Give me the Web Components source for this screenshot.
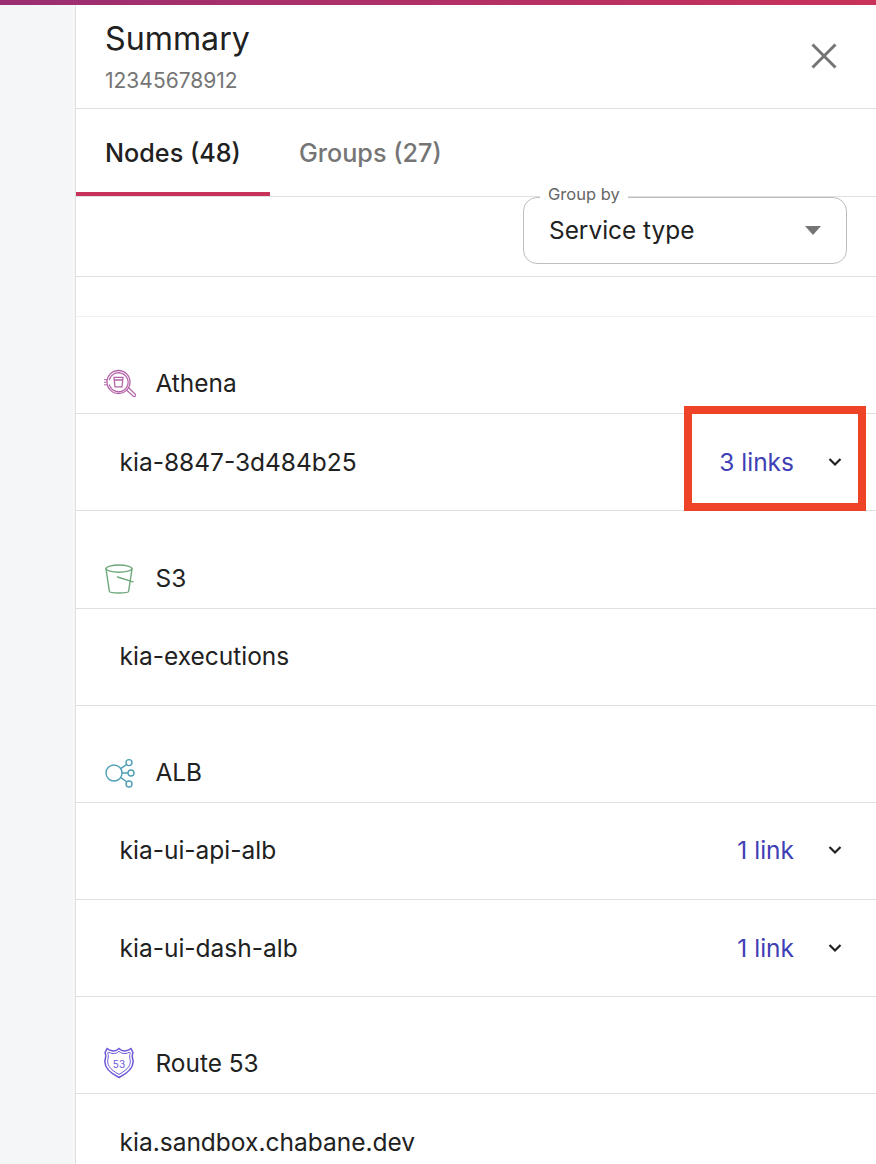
<!doctype html>
<html>
<head>
<meta charset="utf-8">
<title>Summary</title>
<style>
    html,body{margin:0;height:1164px;overflow:hidden;background:#fff}
    body{font-family:Inter,"Liberation Sans",sans-serif;color:#212121}
</style>
</head>
<body>
<summary-page>
    <panel-header slot="header" title="Summary" sub="12345678912"></panel-header>
    <tab-bar slot="tabs">
        <tab-item active>Nodes (48)</tab-item>
        <tab-item>Groups (27)</tab-item>
    </tab-bar>
    <group-select slot="filter" label="Group by" value="Service type"></group-select>

    <service-head icon="athena">Athena</service-head>
    <node-row links="3 links" marked>kia-8847-3d484b25</node-row>
    <service-head icon="s3">S3</service-head>
    <node-row>kia-executions</node-row>
    <service-head icon="alb">ALB</service-head>
    <node-row links="1 link">kia-ui-api-alb</node-row>
    <node-row links="1 link">kia-ui-dash-alb</node-row>
    <service-head icon="route53">Route 53</service-head>
    <node-row>kia.sandbox.chabane.dev</node-row>
</summary-page>

<script>
const ICONS = {
    athena: `<svg width="32" height="32" viewBox="0 0 32 32" fill="none" stroke="#b565a9" stroke-width="1.3" stroke-linecap="round">
        <circle cx="14.5" cy="15" r="11.5"/>
        <path d="M5.5 12.5a9.5 9.5 0 1 1 0 5.5" stroke-dasharray="3 .8"/>
        <path d="M23 23.5l6.2 5.6a1.4 1.4 0 0 0 2-2l-6-5.9"/>
        <path d="M0 12.6h3M0 15.2h2.4M0 17.8h3" stroke-width="1"/>
        <path d="M10 10.4h9l-1 9.4h-7zM10.6 13h7.8"/>
    </svg>`,
    s3: `<svg width="32" height="32" viewBox="0 0 32 32" fill="none" stroke="#6fa87b" stroke-width="1.4" stroke-linecap="round">
        <ellipse cx="15" cy="6.6" rx="13" ry="3.6"/>
        <path d="M2 7l3.4 22.4c.2 1 4.6 1.6 9.6 1.6s9.4-.6 9.6-1.6L28 7"/>
        <path d="M13.5 15l15.5 4.8"/>
    </svg>`,
    alb: `<svg width="32" height="32" viewBox="0 0 32 32" fill="none" stroke="#509fb6" stroke-width="1.4">
        <circle cx="10" cy="17" r="8"/>
        <circle cx="25" cy="6.6" r="3"/>
        <circle cx="27" cy="17" r="3"/>
        <circle cx="25" cy="28" r="3"/>
        <path d="M16.6 12.6l6-4M18 17h6M16.6 21.4l6 4.4"/>
    </svg>`,
    route53: `<svg width="32" height="32" viewBox="0 0 32 32" fill="none" stroke="#6b58d6" stroke-width="1.5">
        <path d="M15 1.5c2 2 3.8 2.9 6 2.5 2.4-.3 4.2-1 6-2.3l2 4c-1 2-1 3.6-.3 6 1.7 6.4-1.2 12.7-13.7 18.8C2.5 24.4-.4 18.1 1.3 11.7c.7-2.4.7-4-.3-6l2-4c1.8 1.3 3.6 2 6 2.3 2.2.4 4-.5 6-2.5z"/>
        <path d="M15 4.3c1.7 1.6 3.5 2.4 6 2.2 1.8-.2 3.2-.6 4.7-1.4l.6 1c-.8 1.7-.8 3.3-.3 5.6 1.3 5.5-1 10.3-11 15.7C5 22 2.7 17.2 4 11.7c.5-2.3.5-3.900-.3-5.600l.6-1c1.500.8 2.900 1.200 4.700 1.400 2.500.2 4.300-.6 6-2.200z" stroke-width="1"/>
        <text x="15" y="20.5" text-anchor="middle" font-family="Inter,sans-serif" font-size="10" fill="#6b58d6" stroke="none">53</text>
    </svg>`
};

class SummaryPage extends HTMLElement {
    constructor(){
        super();
        this.attachShadow({mode:'open'}).innerHTML = `
        <style>
            :host{display:block;height:1164px;overflow:hidden;position:relative}
            .bar{height:5px;background:linear-gradient(90deg,#9a2e72,#c8325a)}
            .wrap{display:flex;height:1159px}
            .rail{width:75px;flex:none;background:#f5f6f8}
            .panel{flex:1;min-width:0;border-left:1px solid #e0e0e0;background:#fff}
            .spacer{height:38.95px;border-bottom:1px solid #f0f0f0}
        </style>
        <div class="bar"></div>
        <div class="wrap">
            <div class="rail"></div>
            <div class="panel">
                <slot name="header"></slot>
                <slot name="tabs"></slot>
                <slot name="filter"></slot>
                <div class="spacer"></div>
                <slot></slot>
            </div>
        </div>`;
    }
}

class PanelHeader extends HTMLElement {
    constructor(){
        super();
        this.attachShadow({mode:'open'}).innerHTML = `
        <style>
            :host{display:flex;align-items:flex-start;justify-content:space-between;height:103px;padding:0 39px 0 29px;border-bottom:1px solid #e0e0e0;box-sizing:content-box}
            h2{margin:13px 0 0;font-size:32.2px;font-weight:400;line-height:42px}
            p{margin:8px 0 0;font-size:21px;line-height:26px;color:#757575}
            svg{display:block;margin-top:38px}
        </style>
        <div><h2></h2><p></p></div>
        <svg width="26" height="26" viewBox="0 0 26 26" fill="none" stroke="#757575" stroke-width="3"><path d="M1.5 1.5l23 23M24.5 1.5l-23 23"/></svg>`;
    }
    connectedCallback(){
        this.shadowRoot.querySelector('h2').textContent = this.getAttribute('title');
        this.shadowRoot.querySelector('p').textContent = this.getAttribute('sub');
        this.removeAttribute('title');
    }
}

class TabBar extends HTMLElement {
    constructor(){
        super();
        this.attachShadow({mode:'open'}).innerHTML = `
        <style>
            :host{display:flex;height:87px;border-bottom:1px solid #e0e0e0}
        </style>
        <slot></slot>`;
    }
}

class TabItem extends HTMLElement {
    constructor(){
        super();
        this.attachShadow({mode:'open'}).innerHTML = `
        <style>
            :host{display:flex;align-items:flex-start;box-sizing:border-box;height:87px;padding:29px 29px 0;font-size:25.2px;line-height:30px;font-weight:500;color:#757575}
            :host([active]){color:#212121;border-bottom:4px solid #c7325a}
        </style>
        <slot></slot>`;
    }
}

class GroupSelect extends HTMLElement {
    constructor(){
        super();
        this.attachShadow({mode:'open'}).innerHTML = `
        <style>
            :host{display:flex;justify-content:flex-end;height:79px;padding-right:29px;border-bottom:1px solid #e0e0e0}
            .box{position:relative;box-sizing:border-box;width:324px;height:67px;border:1px solid #bdbdbd;border-radius:14px;display:flex;align-items:center;justify-content:space-between;padding:0 25px 2px;font-size:24.4px}
            label{position:absolute;left:16px;top:-14px;padding:0 8px;background:#fff;font-size:16.5px;line-height:20px;color:#666}
            i{width:0;height:0;border:8.5px solid transparent;border-top:9px solid #757575;border-bottom:0;margin-top:2px}
        </style>
        <div class="box"><label></label><span></span><i></i></div>`;
    }
    connectedCallback(){
        this.shadowRoot.querySelector('label').textContent = this.getAttribute('label');
        this.shadowRoot.querySelector('span').textContent = this.getAttribute('value');
    }
}

class ServiceHead extends HTMLElement {
    constructor(){
        super();
        this.attachShadow({mode:'open'}).innerHTML = `
        <style>
            :host{display:flex;align-items:flex-end;box-sizing:border-box;height:97.2px;padding:0 0 14px 28px;gap:19.5px;border-bottom:1px solid #e0e0e0;font-size:24.4px;line-height:32px}
            .ic{width:32px;height:32px;flex:none}
            svg{display:block}
        </style>
        <div class="ic"></div><slot></slot>`;
    }
    connectedCallback(){
        this.shadowRoot.querySelector('.ic').innerHTML = ICONS[this.getAttribute('icon')] || '';
    }
}

class NodeRow extends HTMLElement {
    constructor(){
        super();
        this.attachShadow({mode:'open'}).innerHTML = `
        <style>
            :host{display:flex;align-items:center;position:relative;box-sizing:border-box;height:97.2px;padding:0 34px 1.1px 43.5px;border-bottom:1px solid #e0e0e0;font-size:24.5px}
            .name{flex:1}
            .links{display:flex;align-items:center;gap:34px;color:#3f3fb5}
            svg{display:block}
            .mark{position:absolute;left:608px;top:-8px;width:182px;height:104.5px;box-sizing:border-box;border:8.5px solid #ee4326}
        </style>
        <span class="name"><slot></slot></span>
        <span class="links"></span>`;
    }
    connectedCallback(){
        const links = this.getAttribute('links');
        if (links) {
            this.shadowRoot.querySelector('.links').innerHTML = `<span>${links}</span>
                <svg width="14" height="10" viewBox="0 0 14 10" fill="none" stroke="#212121" stroke-width="2.2"><path d="M1.5 2l5.5 5.5 5.5-5.5"/></svg>`;
        }
        if (this.hasAttribute('marked')) {
            const m = document.createElement('div');
            m.className = 'mark';
            this.shadowRoot.appendChild(m);
        }
    }
}

customElements.define('summary-page', SummaryPage);
customElements.define('panel-header', PanelHeader);
customElements.define('tab-bar', TabBar);
customElements.define('tab-item', TabItem);
customElements.define('group-select', GroupSelect);
customElements.define('service-head', ServiceHead);
customElements.define('node-row', NodeRow);
</script>
</body>
</html>
